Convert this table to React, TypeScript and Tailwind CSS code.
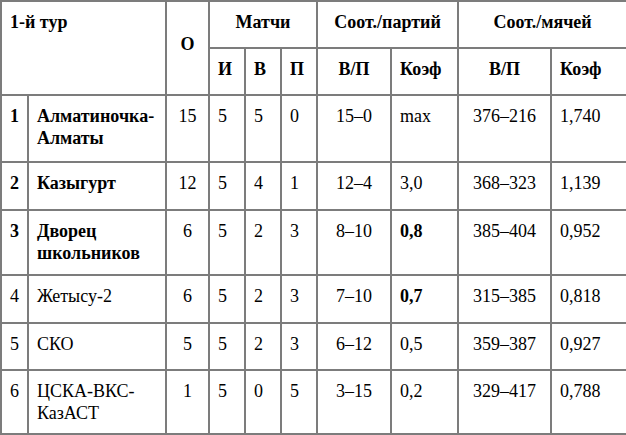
import React from 'react';

type Row = {
  pos: string;
  team: string[];
  bold: boolean;
  pts: string;
  g: string;
  w: string;
  l: string;
  sets: string;
  setK: string;
  setKBold?: boolean;
  balls: string;
  ballK: string;
  h: string;
};

const rows: Row[] = [
  { pos: '1', team: ['Алматиночка-', 'Алматы'], bold: true, pts: '15', g: '5', w: '5', l: '0', sets: '15–0', setK: 'max', balls: '376–216', ballK: '1,740', h: 'h-[67px]' },
  { pos: '2', team: ['Казыгурт'], bold: true, pts: '12', g: '5', w: '4', l: '1', sets: '12–4', setK: '3,0', balls: '368–323', ballK: '1,139', h: 'h-[48px]' },
  { pos: '3', team: ['Дворец', 'школьников'], bold: true, pts: '6', g: '5', w: '2', l: '3', sets: '8–10', setK: '0,8', setKBold: true, balls: '385–404', ballK: '0,952', h: 'h-[65px]' },
  { pos: '4', team: ['Жетысу-2'], bold: false, pts: '6', g: '5', w: '2', l: '3', sets: '7–10', setK: '0,7', setKBold: true, balls: '315–385', ballK: '0,818', h: 'h-[48px]' },
  { pos: '5', team: ['СКО'], bold: false, pts: '5', g: '5', w: '2', l: '3', sets: '6–12', setK: '0,5', balls: '359–387', ballK: '0,927', h: 'h-[47px]' },
  { pos: '6', team: ['ЦСКА-ВКС-', 'КазАСТ'], bold: false, pts: '1', g: '5', w: '0', l: '5', sets: '3–15', setK: '0,2', balls: '329–417', ballK: '0,788', h: 'h-[64px]' },
];

// shared cell look: grey 2px grid, top aligned text
const cell = "border-2 border-[#7c7c7c] align-top pt-[9px] px-2 font-['Liberation_Serif'] text-lg leading-[22px]";

export default function App() {
  return (
    <div className="w-[626px] h-[435px] bg-white overflow-hidden font-serif">
      <table className="table-fixed border-collapse w-[626px] text-black">
        <colgroup>
          <col className="w-[27px]" />
          <col className="w-[138px]" />
          <col className="w-[43px]" />
          <col className="w-[36px]" />
          <col className="w-[36px]" />
          <col className="w-[36px]" />
          <col className="w-[74px]" />
          <col className="w-[67px]" />
          <col className="w-[93px]" />
          <col className="w-[76px]" />
        </colgroup>
        <thead className="font-bold">
          <tr className="h-[47px]">
            <th colSpan={2} rowSpan={2} className={`${cell} text-left`}>1-й тур</th>
            <th rowSpan={2} className={`${cell} text-center pt-[31px]`}>О</th>
            <th colSpan={3} className={`${cell} text-center`}>Матчи</th>
            <th colSpan={2} className={`${cell} text-center`}>Соот./партий</th>
            <th colSpan={2} className={`${cell} text-center`}>Соот./мячей</th>
          </tr>
          <tr className="h-[47px]">
            <th className={`${cell} text-left`}>И</th>
            <th className={`${cell} text-left`}>В</th>
            <th className={`${cell} text-left`}>П</th>
            <th className={`${cell} text-center`}>В/П</th>
            <th className={`${cell} text-left`}>Коэф</th>
            <th className={`${cell} text-center`}>В/П</th>
            <th className={`${cell} text-left`}>Коэф</th>
          </tr>
        </thead>
        <tbody>
          {rows.map(r => (
            <tr key={r.pos} className={r.h}>
              <td className={`${cell} ${r.bold ? 'font-bold' : ''}`}>{r.pos}</td>
              <td className={`${cell} ${r.bold ? 'font-bold' : ''}`}>
                {r.team.map(t => <div key={t}>{t}</div>)}
              </td>
              <td className={`${cell} text-center`}>{r.pts}</td>
              <td className={cell}>{r.g}</td>
              <td className={cell}>{r.w}</td>
              <td className={cell}>{r.l}</td>
              <td className={`${cell} text-center`}>{r.sets}</td>
              <td className={`${cell} ${r.setKBold ? 'font-bold' : ''}`}>{r.setK}</td>
              <td className={`${cell} text-center`}>{r.balls}</td>
              <td className={cell}>{r.ballK}</td>
            </tr>
          ))}
        </tbody>
      </table>
    </div>
  );
}
